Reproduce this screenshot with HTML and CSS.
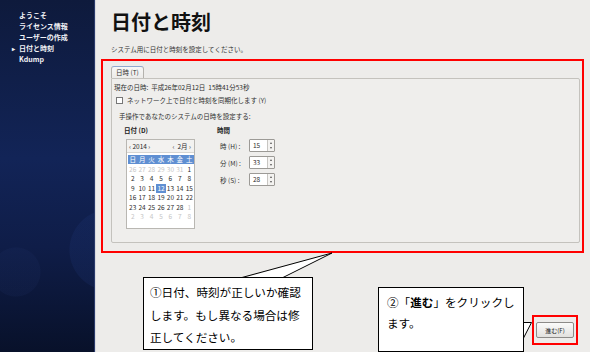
FILE: index.html
```html
<!DOCTYPE html>
<html>
<head>
    <title>日付と時刻</title>
    <meta charset="utf-8">
    <link rel="stylesheet" href="styles.css">
</head>
<body>
    <div class="screen">
        <div class="sidebar">
            <ul class="steps">
                <li>ようこそ</li>
                <li>ライセンス情報</li>
                <li>ユーザーの作成</li>
                <li class="current">日付と時刻</li>
                <li>Kdump</li>
            </ul>
        </div>

        <div class="main">
            <h1>日付と時刻</h1>
            <p class="lead">システム用に日付と時刻を設定してください。</p>

            <div class="tabs">
                <div class="tab">日時 (T)</div>
            </div>
            <div class="panel">
                <p class="now">現在の日時:&nbsp; 平成26年02月12日&nbsp; 15時41分53秒</p>
                <label class="sync"><span class="check"></span>ネットワーク上で日付と時刻を同期化します (Y)</label>
                <p class="manual">手操作であなたのシステムの日時を設定する:</p>

                <div class="sets">
                    <div class="date-col">
                        <h3>日付 (D)</h3>
                        <div class="calendar">
                            <div class="cal-nav">
                                <span>‹ 2014 ›</span>
                                <span>‹&nbsp; 2月 ›</span>
                            </div>
                            <div class="cal-grid">
                                <span class="wd">日</span><span class="wd">月</span><span class="wd">火</span><span class="wd">水</span><span class="wd">木</span><span class="wd">金</span><span class="wd">土</span>
                                <span class="out">26</span><span class="out">27</span><span class="out">28</span><span class="out">29</span><span class="out">30</span><span class="out">31</span><span>1</span>
                                <span>2</span><span>3</span><span>4</span><span>5</span><span>6</span><span>7</span><span>8</span>
                                <span>9</span><span>10</span><span>11</span><span class="sel">12</span><span>13</span><span>14</span><span>15</span>
                                <span>16</span><span>17</span><span>18</span><span>19</span><span>20</span><span>21</span><span>22</span>
                                <span>23</span><span>24</span><span>25</span><span>26</span><span>27</span><span>28</span><span class="out">1</span>
                                <span class="out">2</span><span class="out">3</span><span class="out">4</span><span class="out">5</span><span class="out">6</span><span class="out">7</span><span class="out">8</span>
                            </div>
                        </div>
                    </div>

                    <div class="time-col">
                        <h3>時間</h3>
                        <div class="time-row">
                            <span class="tlabel">時 (H) :</span>
                            <div class="spin"><span class="val">15</span><span class="arrows"><i class="up"></i><i class="down"></i></span></div>
                        </div>
                        <div class="time-row">
                            <span class="tlabel">分 (M) :</span>
                            <div class="spin"><span class="val">33</span><span class="arrows"><i class="up"></i><i class="down"></i></span></div>
                        </div>
                        <div class="time-row">
                            <span class="tlabel">秒 (S) :</span>
                            <div class="spin"><span class="val">28</span><span class="arrows"><i class="up"></i><i class="down"></i></span></div>
                        </div>
                    </div>
                </div>
            </div>

            <div class="footer">
                <button class="next">進む(F)</button>
            </div>
        </div>

        <!-- annotations laid over the screenshot -->
        <div class="mark mark-panel"></div>
        <div class="mark mark-button"></div>

        <svg class="tails" width="590" height="352" viewBox="0 0 590 352">
            <polygon points="242,278.5 332,253 283,278.5" fill="#fff"/>
            <polyline points="242,277.5 332,253 283,277.5" fill="none" stroke="#000" stroke-width="1"/>
            <polygon points="521.5,322 532,322 521.5,340" fill="#fff"/>
            <polyline points="522.5,322.5 531.5,322.5 522.5,340" fill="none" stroke="#000" stroke-width="1"/>
        </svg>

        <div class="callout callout-1">
            <div>①日付、時刻が正しいか確認</div>
            <div>します。もし異なる場合は修</div>
            <div>正してください。</div>
        </div>
        <div class="callout callout-2">
            <div>②「<b>進む</b>」をクリックし</div>
            <div>ます。</div>
        </div>
    </div>
</body>
</html>
```

FILE: styles.css
```css
body { margin: 0; font-family: "Noto Sans CJK JP", "Noto Sans", sans-serif; color: #2e2e2e; }
.screen { position: relative; width: 590px; height: 352px; display: flex; overflow: hidden; background-color: #edecea; }

/* left step list */
.sidebar { width: 94px; flex: none; border-right: 1px solid #2a3a6a;
    background:
        radial-gradient(circle at 16px 272px, rgba(40,60,120,0.12) 0, rgba(40,60,120,0.12) 24px, transparent 25px),
        radial-gradient(circle at 110px 250px, rgba(40,70,150,0.14) 0, rgba(40,70,150,0.14) 40px, transparent 41px),
        linear-gradient(to bottom, #0e1a3c 0%, #122457 45%, #0f1d48 70%, #08112a 100%); }
.steps { list-style: none; margin: 0; padding: 10px 0 0 19px; }
.steps li { font-size: 7px; line-height: 11px; font-weight: bold; color: #f2f2f6; }
.steps .current::before { content: "▸"; display: inline-block; width: 7px; margin-left: -7px; font-size: 6px; }

/* main area */
.main { flex: 1; display: flex; flex-direction: column; padding: 10px 0 0 15px; border-left: 1px solid #d9dae0; }
h1 { margin: 0; font-size: 20px; line-height: 24px; font-weight: bold; color: #111; }
.lead { margin: 10px 0 0; font-size: 6.5px; line-height: 10px; color: #333; }

.tabs { margin-top: 12px; display: flex; }
.tab { height: 11px; padding: 0 4px; font-size: 6.5px; line-height: 11px; border: 1px solid #b4b2ad; border-bottom: none; border-radius: 3px 3px 0 0; background: linear-gradient(to bottom, #f8f8f7, #ecebe9); border-top: 1px solid #8fa8cf; }
.panel { width: 465px; height: 163px; border: 1px solid #c4c2bd; border-radius: 0 2px 2px 2px; background-color: #efeeec; padding: 0 0 0 2px; }
.panel p { margin: 0; font-size: 6.5px; line-height: 10px; }
.now { margin-top: 3px !important; }
.sync { display: flex; align-items: center; margin: 3px 0 0 2px; font-size: 6.5px; line-height: 10px; }
.check { width: 5px; height: 5px; border: 1px solid #777; background: #fff; margin-right: 4px; }
.manual { margin: 6px 0 0 5px !important; }

.sets { display: flex; margin: 4px 0 0 10px; }
.sets h3 { margin: 0; font-size: 6.5px; line-height: 10px; font-weight: bold; color: #222; }
.date-col { width: 93px; }
.calendar { width: 67px; height: 88px; margin: 4px 0 0 2px; border: 1px solid #b9b7b2; background: #fff; }
.cal-nav { height: 12px; display: flex; justify-content: space-between; padding: 0 3px 0 2px; font-size: 6.5px; line-height: 12px; background: #f3f2f0; border-bottom: 1px solid #d8d6d2; }
.cal-grid { display: grid; grid-template-columns: repeat(7, 1fr); grid-auto-rows: 9.5px; width: 66px; margin: 2px 0 0 1px; font-size: 6.5px; line-height: 9.5px; text-align: center; }
.cal-grid .wd { background: #5f8fd2; color: #fff; line-height: 9px; height: 9px; margin-bottom: 2px; }
.cal-grid .out { color: #c6c6c6; }
.cal-grid .sel { background: #5f8fd2; color: #fff; }

.time-row { display: flex; align-items: center; margin: 4px 0 0 3px; }
.tlabel { width: 29px; font-size: 6.5px; line-height: 12px; }
.spin { display: flex; width: 24px; height: 11px; border: 1px solid #9c9a96; border-radius: 1px; background: #fff; }
.spin .val { flex: 1; padding-left: 3px; font-size: 6.5px; line-height: 11px; }
.arrows { width: 6px; display: flex; flex-direction: column; justify-content: space-around; align-items: center; border-left: 1px solid #c8c6c2; background: #f4f3f1; }
.arrows i { width: 0; height: 0; border-left: 1.5px solid transparent; border-right: 1.5px solid transparent; }
.arrows .up { border-bottom: 2px solid #555; }
.arrows .down { border-top: 2px solid #555; }

.footer { margin-top: auto; display: flex; justify-content: flex-end; padding: 0 16px 14px 0; }
.next { width: 38px; height: 16px; padding: 0; font-family: inherit; font-size: 6px; color: #222; border: 1px solid #8d8b88; border-radius: 2px; background: linear-gradient(to bottom, #fbfbfa, #e2e1de); }

/* annotations */
.mark { position: absolute; border: 2px solid #f00; }
.mark-panel { left: 101px; top: 59px; width: 479px; height: 190px; }
.mark-button { left: 532px; top: 315px; width: 42px; height: 26px; }
.tails { position: absolute; left: 0; top: 0; pointer-events: none; }
.callout { position: absolute; background: #fff; border: 1px solid #000; font-family: "Noto Sans CJK JP", sans-serif; font-size: 11.6px; color: #000; white-space: nowrap; }
.callout-1 { left: 143px; top: 277px; width: 160px; height: 68px; padding: 3px 2px 0 6px; line-height: 22.5px; }
.callout-2 { left: 378px; top: 287px; width: 136px; height: 59px; padding: 4px 0 0 8px; line-height: 21px; }
.callout-2 b { font-weight: bold; }
```
